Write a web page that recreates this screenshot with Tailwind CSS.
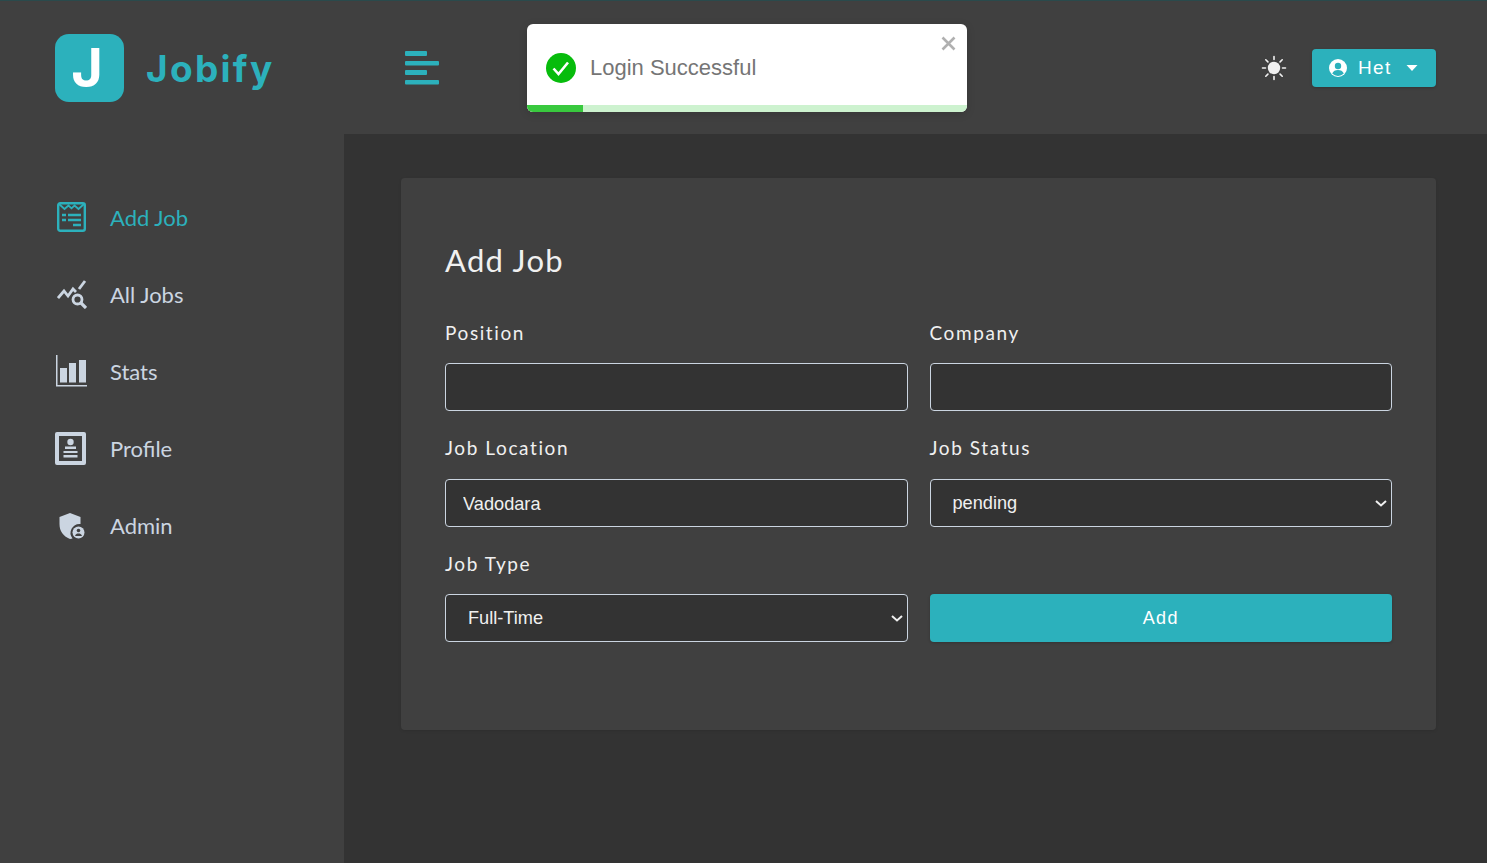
<!DOCTYPE html>
<html lang="en">
<head>
<meta charset="utf-8">
<title>Jobify</title>
<script src="https://cdn.jsdelivr.net/npm/@tailwindcss/browser@4"></script>
</head>
<body class="m-0 h-[863px] overflow-hidden bg-[#333333] font-['Lato',sans-serif]">
<div class="relative flex h-[863px] w-full flex-col">
  <header class="flex h-[134px] shrink-0 items-start border-t border-[#2a4a4c] bg-[#404040]">
    <div class="flex w-[405px] shrink-0 items-center pl-[55px] pt-[33px]">
      <div class="flex h-[68px] w-[69px] items-center justify-center rounded-[14px] bg-[#2cb1bc] pr-[5px] font-['Inter',sans-serif] text-[54px] leading-none font-bold text-white">J</div>
      <span class="ml-[22px] font-['Inter',sans-serif] text-[37px] leading-none font-bold tracking-[2.300px] text-[#2cb1bc]">Jobify</span>
    </div>
    <div class="pt-[50px]">
      <svg class="block h-[34px] w-[34px]" viewBox="0 0 34 34" fill="#2cb1bc"><rect x="0" y="0" width="22" height="5" rx="1"/><rect x="0" y="10" width="34" height="4.500" rx="1"/><rect x="0" y="19" width="22" height="5" rx="1"/><rect x="0" y="29" width="34" height="4.500" rx="1"/></svg>
    </div>
    <div class="ml-auto flex items-center gap-[25px] pt-[48px] pr-[51px]">
      <svg class="h-[26px] w-[26px]" viewBox="0 0 26 26" fill="none" stroke="#f0f0f0" stroke-width="1.600" stroke-linecap="round"><circle cx="13" cy="13" r="6.200" fill="#f0f0f0" stroke="none"/><path d="M13 1.500v3M13 21.500v3M1.500 13h3M21.500 13h3M4.800 4.800l2.100 2.100M19.100 19.100l2.100 2.100M4.800 21.200l2.100-2.100M19.100 6.900l2.100-2.100"/></svg>
      <button class="flex h-[38px] w-[124px] items-center rounded-[4px] bg-[#2cb1bc] pl-[17px] font-['Liberation_Sans',sans-serif] text-[19px] tracking-[1.400px] text-white shadow-[0_1px_3px_rgba(0,0,0,0.2)]">
        <svg class="h-[18px] w-[18px] shrink-0" viewBox="0 0 18 18"><circle cx="9" cy="9" r="9" fill="#fff"/><circle cx="9" cy="7" r="3.200" fill="#2cb1bc"/><path d="M3.200 14.600c1-2.500 3.200-3.600 5.800-3.600s4.800 1.100 5.800 3.600A8 8 0 0 1 9 17a8 8 0 0 1-5.800-2.400z" fill="#2cb1bc"/></svg>
        <span class="ml-[11px]">Het</span>
        <svg class="ml-[14px] h-[8px] w-[12px]" viewBox="0 0 12 8" fill="#fff"><path d="M0.500 1h11L6 7z"/></svg>
      </button>
    </div>
  </header>

  <div class="flex min-h-0 flex-1">
    <aside class="w-[344px] shrink-0 bg-[#404040] pt-[46px] text-[22px] text-[#cbd5e1]">
      <nav class="flex flex-col">
        <a class="flex h-[77px] items-center text-[#2cb1bc]">
          <span class="ml-[57px] flex w-[53px]"><svg class="-mt-[3px] h-[30px] w-[29px]" viewBox="0 0 29 30" fill="none" stroke="#2cb1bc"><rect x="1.200" y="1.200" width="26.600" height="27.600" rx="2" stroke-width="2.400"/><path d="M2 2l5.500 5 4-3.500 3 2.800 3-2.800 4 3.500 5.500-5" stroke-width="1.800"/><path d="M5 13h4M11 13h13M5 18h4M11 18h13M16 23h8" stroke-width="2.400"/></svg></span>
          <span class="-mt-[2px] leading-none">Add Job</span>
        </a>
        <a class="flex h-[77px] items-center">
          <span class="ml-[57px] flex w-[53px]"><svg class="-mt-[2px] h-[29px] w-[30px]" viewBox="0 0 30 29" fill="none" stroke="#cbd5e1" stroke-width="2.800"><path d="M1 18l6-7 4 5 5-7 3 3"/><path d="M22 9l6-8"/><circle cx="20.500" cy="19.500" r="4.500"/><path d="M24 23l5 5" stroke-width="3.200"/></svg></span>
          <span class="-mt-[2px] leading-none">All Jobs</span>
        </a>
        <a class="flex h-[77px] items-center">
          <span class="ml-[56px] flex w-[54px]"><svg class="-mt-[3px] h-[32px] w-[31px]" viewBox="0 0 31 32" fill="#cbd5e1"><path d="M0 0h1.500v30H31v1.500H0z"/><rect x="4" y="13" width="7" height="14.500"/><rect x="13" y="8" width="7" height="19.500"/><rect x="23" y="5" width="7" height="22.500"/></svg></span>
          <span class="-mt-[2px] leading-none">Stats</span>
        </a>
        <a class="flex h-[77px] items-center">
          <span class="ml-[55px] flex w-[55px]"><svg class="-mt-[2px] h-[33px] w-[31px]" viewBox="0 0 31 33" fill="#cbd5e1"><path fill-rule="evenodd" d="M2 0h27a2 2 0 0 1 2 2v29a2 2 0 0 1-2 2H2a2 2 0 0 1-2-2V2a2 2 0 0 1 2-2zm2 4v25h23V4z"/><circle cx="15.500" cy="10" r="3.200"/><path d="M10 14.500h11v2.500H10zM8.500 19h14v2H8.500zM8.500 23h14v2.500h-14z"/></svg></span>
          <span class="-mt-[2px] leading-none">Profile</span>
        </a>
        <a class="flex h-[77px] items-center">
          <span class="ml-[59px] flex w-[51px]"><svg class="-mt-[1px] h-[26px] w-[26px]" viewBox="0 0 26 26"><path d="M11 0l10.500 4v7a9 9 0 0 0-8 14.500l-2.500 0.500C4 23 0.500 18 0.500 11V4z" fill="#cbd5e1"/><circle cx="19.500" cy="19.500" r="6" fill="#cbd5e1"/><circle cx="19.500" cy="17.500" r="1.800" fill="#404040"/><path d="M16 23c.6-2 2-2.500 3.500-2.500s2.900.5 3.500 2.500z" fill="#404040"/></svg></span>
          <span class="-mt-[2px] leading-none">Admin</span>
        </a>
      </nav>
    </aside>

    <main class="min-w-0 flex-1 bg-[#333333] pt-[44px] pr-[51px] pl-[57px]">
      <section class="h-[552px] rounded-[4px] bg-[#404040] px-[44px] pt-[60px] shadow-[0_1px_3px_rgba(0,0,0,0.1)]">
        <h3 class="text-[31px] leading-[44px] tracking-[1.300px] text-[#f0f0f0]">Add Job</h3>
        <form class="mt-[39px] grid grid-cols-2 gap-x-[22px]">
          <div class="h-[115px]">
            <label class="block h-[42px] text-[19px] leading-[23px] tracking-[1.600px] text-[#f0f0f0]">Position</label>
            <input type="text" class="block h-[48px] w-full rounded-[4px] border border-[#cbd5e1] bg-[#333333] px-[17px] pt-[2px] font-['Liberation_Sans',sans-serif] text-[18.200px] text-[#f0f0f0]">
          </div>
          <div class="h-[115px]">
            <label class="block h-[42px] text-[19px] leading-[23px] tracking-[1.600px] text-[#f0f0f0]">Company</label>
            <input type="text" class="block h-[48px] w-full rounded-[4px] border border-[#cbd5e1] bg-[#333333] px-[17px] pt-[2px] font-['Liberation_Sans',sans-serif] text-[18.200px] text-[#f0f0f0]">
          </div>
          <div class="h-[116px]">
            <label class="block h-[43px] text-[19px] leading-[23px] tracking-[1.600px] text-[#f0f0f0]">Job Location</label>
            <input type="text" value="Vadodara" class="block h-[48px] w-full rounded-[4px] border border-[#cbd5e1] bg-[#333333] px-[17px] pt-[2px] font-['Liberation_Sans',sans-serif] text-[18.200px] text-[#f0f0f0]">
          </div>
          <div class="h-[116px]">
            <label class="block h-[43px] text-[19px] leading-[23px] tracking-[1.600px] text-[#f0f0f0]">Job Status</label>
            <div class="relative">
              <select class="block h-[48px] w-full appearance-none rounded-[4px] border border-[#cbd5e1] bg-[#333333] pt-[2px] pl-[22px] font-['Liberation_Sans',sans-serif] text-[18.200px] text-[#f0f0f0]"><option>pending</option></select>
              <svg class="pointer-events-none absolute top-[21px] right-[5px] h-[7px] w-[12px]" viewBox="0 0 12 7" fill="none" stroke="#f0f0f0" stroke-width="2"><path d="M1 1l5 4.500L11 1"/></svg>
            </div>
          </div>
          <div>
            <label class="block h-[42px] text-[19px] leading-[23px] tracking-[1.600px] text-[#f0f0f0]">Job Type</label>
            <div class="relative">
              <select class="block h-[48px] w-full appearance-none rounded-[4px] border border-[#cbd5e1] bg-[#333333] pt-[2px] pl-[22px] font-['Liberation_Sans',sans-serif] text-[18.200px] text-[#f0f0f0]"><option>Full-Time</option></select>
              <svg class="pointer-events-none absolute top-[21px] right-[5px] h-[7px] w-[12px]" viewBox="0 0 12 7" fill="none" stroke="#f0f0f0" stroke-width="2"><path d="M1 1l5 4.500L11 1"/></svg>
            </div>
          </div>
          <div class="flex items-end">
            <button type="button" class="h-[48px] w-full rounded-[4px] bg-[#2cb1bc] font-['Liberation_Sans',sans-serif] text-[18px] tracking-[1.400px] text-white shadow-[0_1px_3px_rgba(0,0,0,0.2)]">Add</button>
          </div>
        </form>
      </section>
    </main>
  </div>

  <div class="absolute top-[24px] left-[527px] h-[88px] w-[440px] overflow-hidden rounded-[6px] bg-white font-['Liberation_Sans',sans-serif] shadow-[0_2px_8px_rgba(0,0,0,0.15)]">
    <div class="flex h-[88px] items-center pl-[19px]">
      <svg class="h-[30px] w-[30px]" viewBox="0 0 30 30"><circle cx="15" cy="15" r="15" fill="#07bc0c"/><path d="M7.500 15.500l5 5.500 9.500-11.500" fill="none" stroke="#fff" stroke-width="2.600"/></svg>
      <span class="ml-[14px] text-[22px] leading-none text-[#757575]">Login Successful</span>
    </div>
    <svg class="absolute top-[12px] right-[11px] h-[15px] w-[15px]" viewBox="0 0 15 15" fill="none" stroke="#b0b0b0" stroke-width="2.600"><path d="M1.500 1.500l12 12M13.500 1.500l-12 12"/></svg>
    <div class="absolute bottom-0 left-0 h-[7px] w-full bg-[#cdf2cf]"></div>
    <div class="absolute bottom-0 left-0 h-[7px] w-[56px] bg-[#39c93e]"></div>
  </div>
</div>
</body>
</html>
